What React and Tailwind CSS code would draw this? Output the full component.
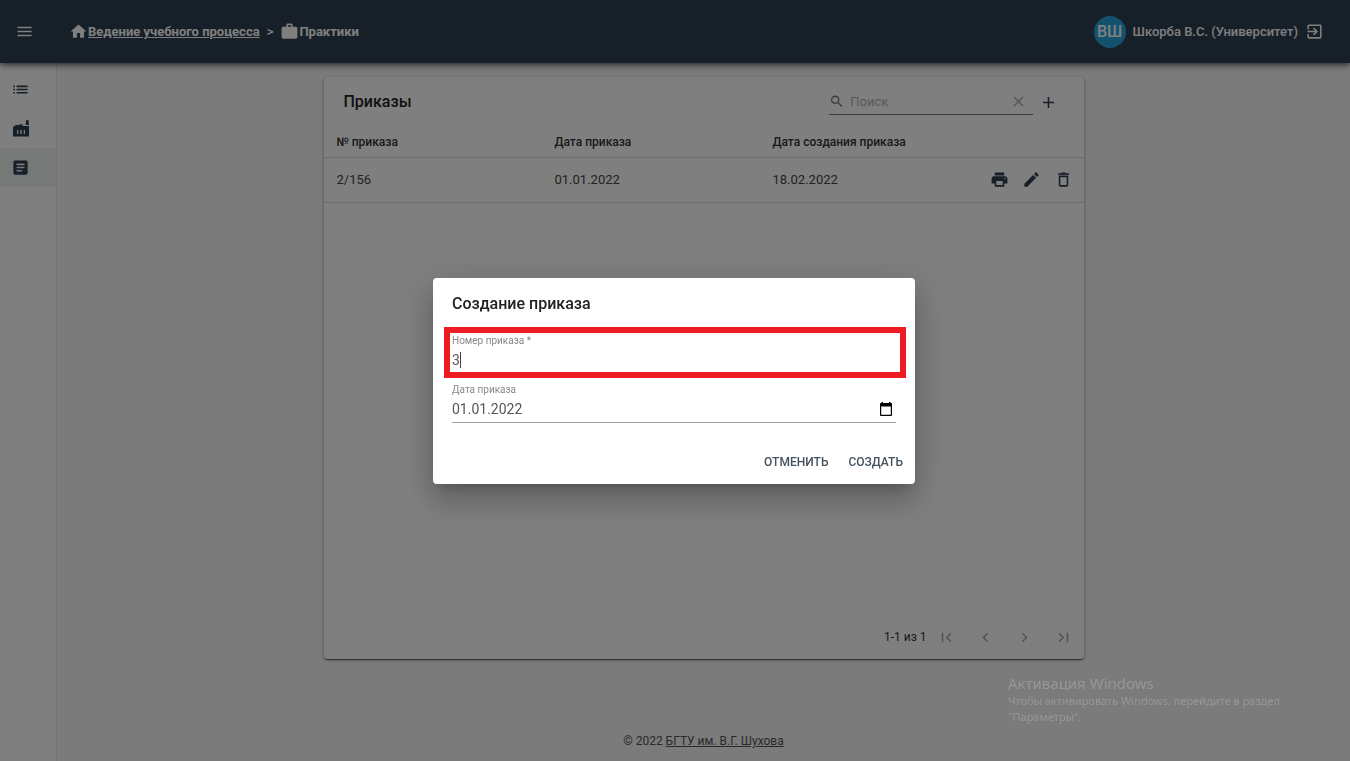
import React from "react";
import {
  MdMenu, MdHome, MdWork, MdExitToApp, MdList, MdArticle, MdSearch, MdClear, MdAdd,
  MdPrint, MdEdit, MdDeleteOutline, MdFirstPage, MdChevronLeft, MdChevronRight,
  MdLastPage,
} from "react-icons/md";

const icon = "size-[19px] shrink-0";

function FactoryIcon() {
  return (
    <svg viewBox="0 0 19 19" className={icon} fill="currentColor" aria-hidden="true">
      <path fillRule="evenodd" d="M2 8 4 6.500 6.500 5.500v1L9 5.500 11.500 5v2H18v10.500H2zM6 11v4h1.300v-4zM9.300 11v4h1.400v-4zM12.700 11v4H14v-4z" />
      <path d="M15.200 1h2.200l.6 5h-3.400z" />
    </svg>
  );
}

function CalendarIcon() {
  return (
    <svg viewBox="0 0 12 14" className="h-3.5 w-3" fill="currentColor" aria-hidden="true">
      <path fillRule="evenodd" d="M1.500 0H3v1h6V0h1.500v1H11a1 1 0 0 1 1 1v11a1 1 0 0 1-1 1H1a1 1 0 0 1-1-1V2a1 1 0 0 1 1-1h.5zM1.200 4.500v8.300h9.600V4.500z" />
    </svg>
  );
}

function Header() {
  return (
    <header className="relative z-10 flex h-[63px] shrink-0 items-center bg-[#2f3e50] pr-[26px] pl-4 text-[13px] font-medium text-white shadow-[0_2px_4px_-1px_rgba(0,0,0,0.4),0_4px_5px_rgba(0,0,0,0.2),0_1px_10px_rgba(0,0,0,0.2)]">
      <button type="button" aria-label="Меню" className="flex size-4 items-center justify-center">
        <MdMenu className={icon} />
      </button>
      <nav className="ml-[37px] flex items-center">
        <a href="#process" className="flex items-center">
          <MdHome className={icon} />
          <span className="font-bold underline">Ведение учебного процесса</span>
        </a>
        <span className="mx-[7px]">&gt;</span>
        <a href="#practice" className="flex items-center">
          <MdWork className={icon} />
          <span className="font-bold">Практики</span>
        </a>
      </nav>
      <div className="ml-auto flex items-center gap-[7px]">
        <span className="flex size-8 items-center justify-center rounded-full bg-[#25a5dc] text-base">ВШ</span>
        <span>Шкорба В.С. (Университет)</span>
        <button type="button" aria-label="Выйти">
          <MdExitToApp className={icon} />
        </button>
      </div>
    </header>
  );
}

function Sidebar() {
  const item = "flex h-[39px] items-center pl-[11px] text-[#2f3e50]";
  return (
    <aside className="w-[57px] shrink-0 border-r border-[#e4e4e4] bg-white pt-[7px]">
      <a href="#list" aria-label="Список" className={item}><MdList className={icon} /></a>
      <a href="#factory" aria-label="Предприятия" className={item}><FactoryIcon /></a>
      <a href="#orders" aria-label="Приказы" className={item + " bg-[#eef3f1]"}><MdArticle className={icon} /></a>
    </aside>
  );
}

const orders = [{ number: "2/156", date: "01.01.2022", created: "18.02.2022" }];

function Orders() {
  return (
    <section className="flex w-190 grow flex-col self-center rounded bg-white shadow-[0_2px_1px_-1px_rgba(0,0,0,0.4),0_1px_2px_rgba(0,0,0,0.3),0_1px_4px_rgba(0,0,0,0.2)]">
      <div className="flex h-[50px] items-center pr-[26px] pl-5">
        <h1 className="text-base font-medium text-[#222]">Приказы</h1>
        <div className="ml-auto flex h-[26px] w-51 items-center border-b border-[#777] text-[#777]">
          <MdSearch className="size-[17px]" aria-hidden="true" />
          <input type="text" aria-label="Поиск" placeholder="Поиск" className="ml-1.5 min-w-0 grow text-[13px] outline-none placeholder:text-[#b4b4b4]" />
          <button type="button" aria-label="Очистить" className="px-1.5 text-[#aaa]"><MdClear className="size-[17px]" /></button>
        </div>
        <button type="button" aria-label="Добавить" className="ml-1.5 text-[#2f3e50]"><MdAdd className={icon} /></button>
      </div>
      <table className="w-full table-fixed text-left">
        <thead>
          <tr className="h-[30px] border-b border-[#dcdcdc] text-xs text-[#333]">
            <th className="pl-[13px] font-medium">№ приказа</th>
            <th className="pl-[13px] font-medium">Дата приказа</th>
            <th className="pl-[13px] font-medium">Дата создания приказа</th>
            <th className="w-[106px]" aria-label="Действия" />
          </tr>
        </thead>
        <tbody>
          {orders.map((o) => (
            <tr key={o.number} className="h-[45px] border-b border-[#dcdcdc] text-[13px] text-[#444]">
              <td className="pl-[13px]">{o.number}</td>
              <td className="pl-[13px]">{o.date}</td>
              <td className="pl-[13px]">{o.created}</td>
              <td className="pl-3">
                <div className="flex items-center gap-[13px] text-[#2f3e50]">
                  <button type="button" aria-label="Печать"><MdPrint className={icon} /></button>
                  <button type="button" aria-label="Изменить"><MdEdit className={icon} /></button>
                  <button type="button" aria-label="Удалить"><MdDeleteOutline className={icon} /></button>
                </div>
              </td>
            </tr>
          ))}
        </tbody>
      </table>
      <div className="mt-auto flex h-11 items-center justify-end pr-[11px] text-xs text-[#333]">
        <span className="mr-2.5">1-1 из 1</span>
        <div className="flex gap-5 text-[#aaa]">
          <button type="button" aria-label="Первая страница"><MdFirstPage className={icon} /></button>
          <button type="button" aria-label="Назад"><MdChevronLeft className={icon} /></button>
          <button type="button" aria-label="Вперёд"><MdChevronRight className={icon} /></button>
          <button type="button" aria-label="Последняя страница"><MdLastPage className={icon} /></button>
        </div>
      </div>
    </section>
  );
}

function CreateDialog() {
  return (
    <div className="fixed inset-0 z-20 flex items-center justify-center bg-black/50 pr-0.5">
      <form role="dialog" aria-labelledby="dialog-title" className="w-full max-w-[482px] rounded bg-white pb-1.5 text-[#555] shadow-[0_9px_12px_-6px_rgba(0,0,0,0.2),0_19px_30px_2px_rgba(0,0,0,0.14),0_7px_37px_6px_rgba(0,0,0,0.12)]">
        <h2 id="dialog-title" className="px-[19px] pt-3.5 text-base font-medium text-[#222]">Создание приказа</h2>
        <div className="mt-[11px] mr-[9px] ml-[11px] h-[51px] border-6 border-[#ed1c24] px-0.5 pt-0.5">
          <label htmlFor="number" className="block text-[10px] leading-3 text-[#888]">Номер приказа *</label>
          <div className="flex h-[27px] items-center text-sm">
            <input id="number" type="text" defaultValue="3" className="w-2 outline-none" />
            <span className="h-4 w-px bg-[#444]" aria-hidden="true" />
          </div>
        </div>
        <div className="mx-[19px] mt-1.5">
          <label htmlFor="date" className="block text-[10px] leading-3 text-[#888]">Дата приказа</label>
          <div className="flex h-[27px] items-center border-b border-[#a0a0a0] text-sm">
            <input id="date" type="text" defaultValue="01.01.2022" className="min-w-0 grow outline-none" />
            <button type="button" aria-label="Открыть календарь" className="mr-1 text-black"><CalendarIcon /></button>
          </div>
        </div>
        <div className="mt-[23px] flex justify-end gap-1 px-1 text-xs font-medium text-[#44525f]">
          <button type="button" className="h-8 px-2">ОТМЕНИТЬ</button>
          <button type="submit" className="h-8 px-2">СОЗДАТЬ</button>
        </div>
      </form>
    </div>
  );
}

export default function App() {
  return (
    <div className="flex min-h-screen flex-col bg-[#f7f7f7] font-[Roboto,'Liberation_Sans',sans-serif]">
      <Header />
      <div className="flex grow">
        <Sidebar />
        <main className="flex grow flex-col pt-3.5">
          <Orders />
          <footer className="flex h-[102px] shrink-0 items-end justify-center pb-3 text-xs leading-4 text-[#555]">
            <span>© 2022 <a href="#bstu" className="underline">БГТУ им. В.Г. Шухова</a></span>
          </footer>
        </main>
      </div>
      <CreateDialog />
      <aside className="pointer-events-none fixed right-14 bottom-9 z-30 w-[286px] font-['Noto_Sans','Open_Sans',sans-serif] text-[11px] leading-4 text-[#979797]">
        <p className="text-[15px] leading-5">Активация Windows</p>
        <p>Чтобы активировать Windows, перейдите в раздел<br />"Параметры".</p>
      </aside>
    </div>
  );
}
